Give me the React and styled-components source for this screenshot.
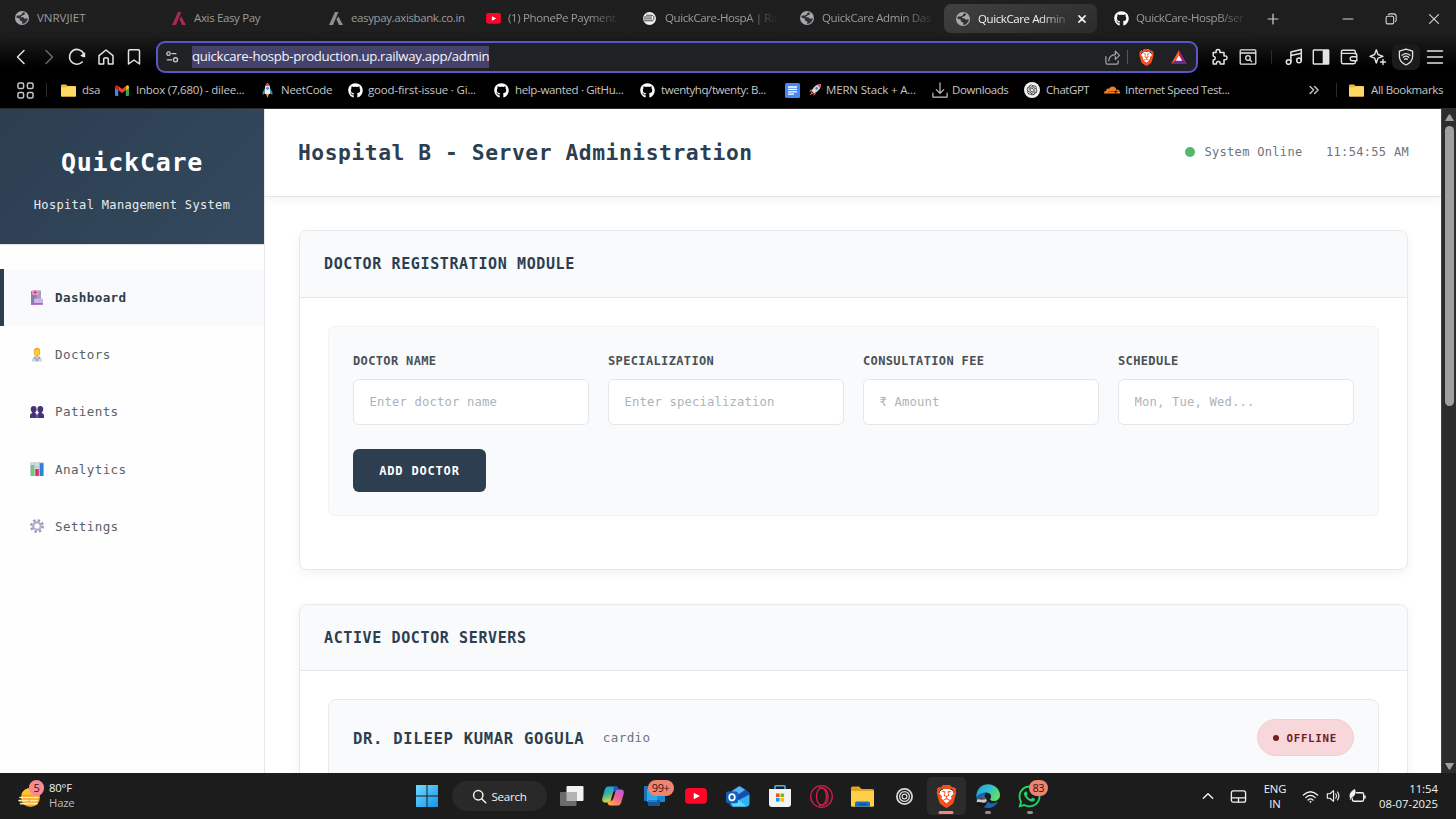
import React from 'react';
import styled, { createGlobalStyle, css } from 'styled-components';
import { FaGithub, FaWhatsapp } from 'react-icons/fa';
import { SiBrave, SiOpenai, SiCloudflare } from 'react-icons/si';

const UI = `"Open Sans", "Noto Sans", sans-serif`;
const MONO = `"DejaVu Sans Mono", "Liberation Mono", monospace`;

const Global = createGlobalStyle`
  * { box-sizing: border-box; }
  body { margin: 0; background: #000; overflow: hidden; }
  svg { display: block; flex: none; overflow: visible; }
`;

const Screen = styled.div`
  width: 1456px; height: 819px; display: flex; flex-direction: column;
  font-family: ${UI}; overflow: hidden;
`;

/* ---------- browser chrome ---------- */
const Chrome = styled.header`
  height: 109px; flex: none; display: flex; flex-direction: column;
  background: linear-gradient(#1f1f1f 0, #1e1e1e 34px, #000 68px, #000 100%);
  border-bottom: 1px solid #2b2b2b;
`;
const TabStrip = styled.div`
  height: 38px; display: flex; align-items: flex-start; padding: 4px 0 0 2px; gap: 4px;
`;
const Tab = styled.div`
  width: 153px; height: 29px; padding: 0 ${p => (p.$active ? 7 : 3)}px 0 ${p => (p.$active ? 12 : 13)}px;
  display: flex; align-items: center;
  border-radius: 7px; color: ${p => (p.$active ? '#f1f1f1' : '#9b9b9b')};
  ${p => (p.$active ? css`background: linear-gradient(160deg, #414141, #2b2b2b);`
    : css`border-bottom: 1px solid #1b1b1b;`)}
`;
const TabIcon = styled.span`width: 22px; flex: none; display: flex; align-items: center;`;
const TabTitle = styled.span`
  flex: 1; overflow: hidden; white-space: nowrap; font-size: 11.5px; line-height: 18px;
  letter-spacing: ${p => p.$ls || 0}px;
  ${p => p.$fade && css`mask-image: linear-gradient(90deg, #000 calc(100% - 34px), transparent calc(100% - 2px));`}
`;
const NewTab = styled.span`width: 29px; height: 29px; display: grid; place-items: center; color: #ccc;`;
const WindowControls = styled.div`
  margin-left: auto; display: flex; height: 29px; align-items: center; color: #d6d6d6; padding-right: 1px;
`;
const WinButton = styled.span`width: 43px; display: grid; place-items: center;`;

const Toolbar = styled.div`height: 38px; display: flex; align-items: center; padding-left: 7px; color: #e3e3e3;`;
const Cell = styled.span`
  width: ${p => p.$w}px; height: 28px; display: grid; place-items: center; color: ${p => p.$c || 'inherit'}; flex: none;
`;
const DividerCell = styled(Cell)`margin-right: 8px;`;
const ShieldCell = styled(Cell)`height: 26px; background: #1b1b1b; border-radius: 7px;`;
const Divider = styled.span`width: 1px; height: 14px; background: ${p => p.$c || '#2b2b2b'};`;
const AddressBar = styled.div`
  width: 1042px; height: 32px; margin: 0 7px 0 9px; display: flex; align-items: center; flex: none;
  border: 2px solid #5b55c8; border-radius: 9px; background: #202125; padding: 0 3px 0 0;
`;
const Url = styled.span`
  background: #45436c; color: #f4f4fa; font-size: 13.2px; line-height: 21px; height: 22px;
  white-space: nowrap; letter-spacing: -0.3px; width: 297px; margin-right: auto; margin-left: 7px;
`;

const Bookmarks = styled.div`height: 28px; display: flex; align-items: center; padding-left: 10px; color: #c6c6c6;`;
const Bookmark = styled.span`
  width: ${p => p.$w}px; display: flex; align-items: center; white-space: nowrap; flex: none;
  font-size: 11.5px; letter-spacing: ${p => p.$ls || 0}px; line-height: 16px;
`;
const BookmarkIcon = styled.span`width: ${p => p.$w}px; flex: none; display: flex; align-items: center;`;

/* ---------- web page ---------- */
const Viewport = styled.div`height: 664px; flex: none; display: flex; background: #fff; font-family: ${MONO}; overflow: hidden;`;
const Sidebar = styled.aside`width: 265px; flex: none; border-right: 1px solid #e4e6e9; background: #fefefe;`;
const Brand = styled.div`
  height: 136px; border-bottom: 1px solid #dfe3e8; text-align: center; color: #fff; padding-top: 34px;
  background: linear-gradient(135deg, #2c3e50, #34495e);
`;
const BrandName = styled.div`font-size: 25px; font-weight: 700; line-height: 40px; letter-spacing: 0.75px;`;
const BrandSub = styled.div`font-size: 12px; line-height: 20px; margin-top: 12px; letter-spacing: 0.33px; color: #e9ecef;`;
const Nav = styled.nav`padding-top: 24px;`;
const NavItem = styled.div`
  height: 57.2px; display: flex; align-items: center; padding-left: 26px; gap: 11px;
  border-left: 4px solid ${p => (p.$active ? '#2c3e50' : 'transparent')};
  background: ${p => (p.$active ? '#f8fafb' : 'transparent')};
  color: ${p => (p.$active ? '#2c3e50' : '#5a6268')}; font-weight: ${p => (p.$active ? 700 : 400)};
  font-size: 12.6px; letter-spacing: 0.36px;
`;
const NavIcon = styled.span`width: 14px; flex: none; display: grid; place-items: center;`;
const Main = styled.main`flex: 1; min-width: 0; overflow: hidden;`;
const PageHeader = styled.div`
  height: 88px; padding: 0 32px 1px 33px; display: flex; align-items: center; justify-content: space-between;
  border-bottom: 1px solid #e4e6e9; box-shadow: 0 2px 9px rgba(0, 0, 0, 0.06);
`;
const PageTitle = styled.h1`margin: 0; color: #2c3e50; font-size: 21.3px; font-weight: 700; letter-spacing: 0.55px; white-space: nowrap;`;
const Status = styled.div`display: flex; align-items: center; color: #6c757d; font-size: 12px; letter-spacing: 0.32px; white-space: nowrap;`;
const Dot = styled.span`width: 10px; height: 10px; border-radius: 50%; background: #52b96a; margin-right: 9px;`;
const Clock = styled.span`margin-left: 23.5px;`;
const Content = styled.div`padding: 33px 33px 0 34px; display: flex; flex-direction: column; gap: 34px;`;
const Card = styled.section`
  height: ${p => p.$h}px; border: 1px solid #e6e9eb; border-radius: 8px; background: #fff; flex: none;
  box-shadow: 0 3px 11px rgba(0, 0, 0, 0.055); overflow: hidden;
`;
const CardHead = styled.h2`
  margin: 0; height: ${p => p.$h || 67}px; padding: ${p => (p.$h ? '1px 24px 0' : '0 24px 1px')}; display: flex; align-items: center;
  border-bottom: 1px solid #e6e9eb; background: #f8fafb; color: #2c3e50; font-size: 15px; font-weight: 700; letter-spacing: 0.62px;
`;
const CardBody = styled.div`padding: 28px 28px;`;
const Form = styled.div`
  height: 190px; padding: 24px 24px; border: 1px solid #f0f2f4; border-radius: 6px; background: #f8fafb;
`;
const Fields = styled.div`display: grid; grid-template-columns: repeat(4, 1fr); gap: 19px;`;
const Field = styled.label`
  display: flex; flex-direction: column; color: #495057; font-size: 12px; font-weight: 700;
  line-height: 21px; letter-spacing: 0.36px;
`;
const Input = styled.input`
  width: 100%; height: 46px; margin-top: 7px; padding: 0 15.5px; border: 1px solid #e3e7ea; border-radius: 6px;
  background: #fff; font: 400 12.2px ${MONO}; letter-spacing: 0.16px;
  &::placeholder { color: #adb3ba; opacity: 1; }
`;
const AddButton = styled.button`
  margin-top: 24px; width: 133px; height: 43px; border: 0; border-radius: 6px; background: #2c3e50; color: #fff;
  font: 700 12px ${MONO}; letter-spacing: 0.82px; padding: 0;
`;
const Server = styled.div`
  height: 120px; padding: 0 24px; border: 1px solid #e6e9eb; border-radius: 8px; background: #f8fafb;
`;
const ServerHead = styled.div`height: 75px; display: flex; align-items: center;`;
const DoctorName = styled.span`color: #2c3e50; font-weight: 700; font-size: 15.6px; letter-spacing: 0.67px; margin-top: 2px;`;
const Specialty = styled.span`color: #6c757d; font-size: 12.6px; letter-spacing: 0.36px; margin-left: 18.5px;`;
const Pill = styled.span`
  margin-left: auto; width: 97px; height: 37px; border-radius: 19px; background: #f8d7da; border: 1px solid #f5cdd1; color: #721c24;
  display: flex; align-items: center; padding: 1px 0 0 15px; gap: 7.5px; font-weight: 700; font-size: 10.8px; letter-spacing: 0.7px;
`;
const PillDot = styled.span`width: 6px; height: 6px; border-radius: 50%; background: #721c24;`;
const Scrollbar = styled.div`
  width: 15px; background: #2c2c2c; border-left: 1px solid #444; display: flex; flex-direction: column; align-items: center; padding: 5px 0 3px;
`;
const Thumb = styled.div`width: 9px; height: 280px; margin: 5px 0 auto; border-radius: 5px; background: #9f9f9f;`;

/* ---------- taskbar ---------- */
const Taskbar = styled.footer`
  height: 46px; flex: none; display: flex; align-items: center; background: #1c1c1c; color: #f2f2f2; font-size: 11.3px;
`;
const Weather = styled.div`width: 406px; display: flex; align-items: center; padding: 0 0 3px 18px; gap: 8px;`;
const WeatherText = styled.div`line-height: 15px; letter-spacing: -0.2px;`;
const Muted = styled.div`color: #bdbdbd;`;
const Search = styled.div`
  width: 95px; height: 30px; margin: 0 4px; border-radius: 15px; background: #292929; display: flex; align-items: center;
  justify-content: center; gap: 4px; font-size: 11.6px; letter-spacing: -0.25px;
`;
const TaskItem = styled.div`
  position: relative; width: ${p => p.$w || 41.7}px; height: 46px; display: grid; place-items: center; flex: none;
`;
const ActiveTile = styled.div`width: 39px; height: 38px; border-radius: 5px; background: #2b2b2b; display: grid; place-items: center;`;
const Running = styled.span`
  position: absolute; bottom: 5px; left: 50%; transform: translateX(-50%); height: 3px; border-radius: 2px;
  width: ${p => (p.$active ? 15 : 6)}px; background: ${p => (p.$active ? '#ee8a78' : '#8f8f8f')};
`;
const Badge = styled.span`
  position: absolute; top: ${p => p.$top}px; left: ${p => p.$left}px; height: 16px; width: ${p => p.$w}px;
  border-radius: 8px; background: ${p => p.$c || '#ee8570'}; color: #3a1512; font-size: 11px; line-height: 16px;
  text-align: center; letter-spacing: -0.4px;
`;
const WeatherIcon = styled.div`position: relative; width: 23px; height: 28px; display: grid; place-items: start center; padding-top: 7px;`;
const Tray = styled.div`margin-left: auto; display: flex; align-items: center; padding-right: 18px;`;
const Lang = styled.div`width: 44px; text-align: center; line-height: 15px; letter-spacing: -0.2px;`;
const DateTime = styled.div`
  display: flex; flex-direction: column; align-items: flex-end; line-height: 15px; width: 68px; margin-top: -1px; white-space: nowrap;
`;
const BraveMark = styled.span`
  width: ${p => p.$s}px; height: ${p => p.$s}px; display: grid; place-items: center; color: #f4501e;
  background: radial-gradient(circle, #fff 0 48%, transparent 50%);
`;

/* ---------- drawings ---------- */
const Line = ({ s = 18, w = 1.5, children, ...r }) => (
  <svg width={s} height={s} viewBox="0 0 18 18" fill="none" stroke="currentColor" strokeWidth={w}
    strokeLinecap="round" strokeLinejoin="round" {...r}>{children}</svg>
);
const Globe = () => (
  <svg width="14" height="14" viewBox="0 0 14 14">
    <circle cx="7" cy="7" r="7" fill="#a5a8ab" />
    <path d="M8 1.2 10.3 2 9.2 3.8 6.4 5 5.8 6.2 8.4 6.2 9.8 7.8 12.8 7.2 12.2 9.8 10 12.2 7 12.9 7.4 10.8 5 9.4 4.6 7.6 1.2 6.6 2 4.4 4.6 4.6 6.6 3.6Z" fill="#2e3033" />
  </svg>
);
const Axis = ({ c }) => (
  <svg width="14" height="13" viewBox="0 0 14 13" fill={c}>
    <path d="M6 0H9.4L4 13H0Z" /><path d="M7.4 7.3 9.4 4.4 14 13H10Z" />
  </svg>
);
const Youtube = ({ w }) => (
  <svg width={w} height={w * 0.72} viewBox="0 0 22 16">
    <rect width="22" height="16" rx="3.6" fill="#ff0528" /><path d="M8.7 4.7 15 8 8.7 11.3Z" fill="#fff" />
  </svg>
);
const Railway = () => (
  <svg width="13" height="13" viewBox="0 0 13 13">
    <circle cx="6.5" cy="6.5" r="6.5" fill="#f0f0f0" />
    <path d="M1 5H8.8M.5 6.9H9M1 8.8H9.6M3 3.2H8c2 0 3 1.2 3 2.6S10.4 8.4 9.4 8.8" stroke="#25252b" strokeWidth=".8" fill="none" />
  </svg>
);
const Folder = () => (
  <svg width="15" height="13" viewBox="0 0 15 13">
    <path d="M0 1.6Q0 .4 1.2.4H5L6.6 2H13.8Q15 2 15 3.2V11.4Q15 12.6 13.8 12.6H1.2Q0 12.6 0 11.4Z" fill="#f2b93b" />
    <path d="M0 4.4Q0 3.6 1 3.6H5.2L6.7 2.6H14Q15 2.6 15 3.6V11.4Q15 12.6 13.8 12.6H1.2Q0 12.6 0 11.4Z" fill="#ffd966" />
  </svg>
);
const Gmail = () => (
  <svg width="14" height="11" viewBox="0 0 14 11">
    <path d="M0 1.4V10Q0 11 1 11H3.2V4.6Z" fill="#4285f4" />
    <path d="M14 1.4V10Q14 11 13 11H10.8V4.6Z" fill="#34a853" />
    <path d="M10.8 5V1L12.2.3Q14 0 14 1.8V3.2L10.8 5.6Z" fill="#fbbc04" />
    <path d="M3.2 1 7 4 10.8 1V5.2L7 8.1 3.2 5.2Z" fill="#ea4335" />
    <path d="M0 3V1.8Q.2 0 1.8.2L3.2 1V5.4Z" fill="#c5221f" />
  </svg>
);
const RocketUp = () => (
  <svg width="11" height="15" viewBox="0 0 11 15">
    <path d="M2.8 6 .6 9V12L3 10.5ZM8.2 6 10.4 9V12L8 10.5Z" fill="#3b88c9" />
    <path d="M5.5 0C8 2 8.6 5 8 11H3C2.4 5 3 2 5.5 0Z" fill="#e9eef3" />
    <path d="M5.5 0C6.6.9 7.4 2 7.8 3H3.2C3.6 2 4.4.9 5.5 0Z" fill="#d94841" />
    <circle cx="5.5" cy="5.3" r="1.4" fill="#3d7fc4" /><path d="M4 11H7L5.5 15Z" fill="#f39a2d" />
  </svg>
);
const RocketTilt = () => (
  <svg width="12" height="12" viewBox="0 0 12 12">
    <path d="M3.6 5 1.4 5.4 0 7.8 3 7.4ZM7 8.4 6.6 10.6 4.4 12 4.6 9Z" fill="#e2324d" />
    <path d="M12 0C12 4 9.5 7.4 5 9.4L2.6 7C4.6 2.5 8 0 12 0Z" fill="#d7dbe0" />
    <path d="M12 0C12 1.5 11.7 2.7 11.1 3.9L8.1.9C9.3.3 10.5 0 12 0Z" fill="#ed4661" />
    <circle cx="7.6" cy="4.4" r="1.3" fill="#3c7bb5" /><path d="M2.6 8 4 9.4 1 11.2Z" fill="#ff9a3c" />
  </svg>
);
const Docs = () => (
  <svg width="15" height="15" viewBox="0 0 15 15"><rect width="15" height="15" rx="1.5" fill="#4688f4" />
    <path d="M3 4H12M3 6.4H12M3 8.8H12M3 11.2H9" stroke="#fff" strokeWidth="1.3" /></svg>
);
const Gpt = () => (
  <svg width="16" height="16" viewBox="0 0 16 16"><circle cx="8" cy="8" r="8" fill="#f2f2f2" />
    <g transform="translate(2.7 2.7)" color="#222"><SiOpenai size={10.6} /></g></svg>
);
const Bat = () => (
  <svg width="16" height="14" viewBox="0 0 16 14">
    <path d="M8 0 0 14 8 8.5Z" fill="#ff5a35" /><path d="M8 0 16 14 8 8.5Z" fill="#9e2072" />
    <path d="M0 14H16L8 8.5Z" fill="#662d91" /><path d="M8 5.2 11.2 10.8H4.8Z" fill="#fff" />
  </svg>
);
const Hospital = () => (
  <svg width="12" height="15" viewBox="0 0 12 15">
    <rect x="0" y="1" width="7" height="13.5" fill="#8d7ea6" /><rect x="5.5" y=".5" width="4.5" height="9" fill="#ab9dbd" />
    <rect x="1.2" y="0" width="6" height="4.8" rx="1" fill="#f0a5cf" /><path d="M4.2 .7V4.1M2.5 2.4H5.9" stroke="#d13a8b" strokeWidth="1.2" />
    <rect x="3" y="8.5" width="9" height="4.6" rx=".8" fill="#d4afed" />
    <rect x="0" y="13" width="12" height="1.8" fill="#a968c8" />
  </svg>
);
const Doctor = () => (
  <svg width="12" height="15" viewBox="0 0 13 15">
    <path d="M1 15Q1 9.4 6.5 9.4T12 15Z" fill="#c5d3ea" /><path d="M4.6 9.3H8.4L6.5 12.8Z" fill="#fff" />
    <path d="M4.4 9.6V12.5M8.6 9.6V12.5M6.5 11V15" stroke="#5c68a6" strokeWidth=".9" />
    <path d="M3 4.2C3 1.4 4.4.2 6.5.2S10 1.4 10 4.2L9.5 8.2H3.5Z" fill="#eda52d" /><ellipse cx="6.4" cy="5.2" rx="2.7" ry="3.4" fill="#ffc83d" />
    <rect x="5.3" y="7.6" width="2.4" height="2.8" fill="#efb22e" />
  </svg>
);
const People = () => (
  <svg width="14" height="12" viewBox="0 0 14 12" fill="#48307a">
    <ellipse cx="3.7" cy="3.3" rx="2.9" ry="3.2" /><ellipse cx="10.3" cy="3.3" rx="2.9" ry="3.2" />
    <path d="M0 12V9.6Q0 7.2 2.4 7H5Q6.8 7.2 6.8 9.6V12ZM7.2 12V9.6Q7.2 7.2 9 7H11.6Q14 7.2 14 9.6V12ZM2.2 4H5.2V8H2.2ZM8.8 4H11.8V8H8.8Z" />
  </svg>
);
const Chart = () => (
  <svg width="14" height="14" viewBox="0 0 14 14"><rect width="14" height="14" rx="1" fill="#d5d8e2" />
    <path d="M5 0V14M9.5 0V14M0 5H14M0 9.5H14" stroke="#b5b8c8" strokeWidth=".5" />
    <rect x=".7" y="3" width="3.6" height="11" fill="#6fcf70" /><rect x="5.3" y="7" width="3.5" height="7" fill="#dd2e6b" />
    <rect x="9.8" y="1.2" width="3.6" height="12.8" fill="#2d83d4" /></svg>
);
const Gear = () => (
  <svg width="14" height="14" viewBox="0 0 14 14">
    <circle cx="7" cy="7" r="5.8" fill="none" stroke="#9a91b5" strokeWidth="2.2" strokeDasharray="2.4 2.15" />
    <circle cx="7" cy="7" r="3.8" fill="none" stroke="#b6aecd" strokeWidth="2.4" />
  </svg>
);
const Arrow = ({ down }) => (
  <svg width="9" height="7" viewBox="0 0 9 7"><path d={down ? 'M0 0H9L5.2 6.5H3.8Z' : 'M0 7H9L5.2 .5H3.8Z'} fill="#9f9f9f" /></svg>
);
const Haze = () => (
  <svg width="21" height="19" viewBox="0 0 21 19"><circle cx="11.5" cy="9.5" r="9.5" fill="#f5a623" />
    <path d="M11.5 0A9.5 9.5 0 0 0 2.5 6.5H20Q17 0 11.5 0Z" fill="#ffc52e" />
    <path d="M1 9.5H19M0 12.6H9M11.5 12.6H18M1.5 15.6H18" stroke="#ffe9a8" strokeWidth="1.6" strokeLinecap="round" /></svg>
);
const Windows = () => (
  <svg width="22" height="22" viewBox="0 0 22 22">
    <defs><linearGradient id="win" x1="0" y1="0" x2="1" y2="1"><stop stopColor="#6fdcff" /><stop offset="1" stopColor="#1593e6" /></linearGradient></defs>
    <path d="M0 0H10.5V10.5H0ZM11.5 0H22V10.5H11.5ZM0 11.5H10.5V22H0ZM11.5 11.5H22V22H11.5Z" fill="url(#win)" /></svg>
);
const TaskView = () => (
  <svg width="24" height="22" viewBox="0 0 24 22"><rect x="6.5" y="1" width="17" height="15" rx="1" fill="#f2f2f2" />
    <rect x="0" y="7" width="16.5" height="14" rx="1" fill="#6b6b6b" /><rect x="6.5" y="7" width="10" height="9" fill="#b3b3b3" /></svg>
);
const Copilot = () => (
  <svg width="22" height="20" viewBox="0 0 22 20">
    <defs>
      <linearGradient id="c1" x1="0" y1="0" x2=".3" y2="1"><stop stopColor="#1a9df0" /><stop offset=".5" stopColor="#37b29b" /><stop offset="1" stopColor="#f3d33a" /></linearGradient>
      <linearGradient id="c2" x1="1" y1="0" x2=".3" y2="1"><stop stopColor="#a760ee" /><stop offset=".5" stopColor="#ef5f96" /><stop offset="1" stopColor="#ffa64c" /></linearGradient>
    </defs>
    <path d="M6 .6H14Q15.6.6 16.2 2.5L17 5H13.5Q11.6 5 11 7L9 14Q8.3 16.5 6 16.5H2.6Q-.5 16 .3 12.3L2.8 3.5Q3.8.6 6 .6Z" fill="url(#c1)" />
    <path d="M16 19.4H8Q6.4 19.4 5.8 17.5L5 15H8.5Q10.4 15 11 13L13 6Q13.7 3.5 16 3.5H19.4Q22.5 4 21.7 7.7L19.2 16.5Q18.2 19.4 16 19.4Z" fill="url(#c2)" />
    <path d="M12 .6H14Q15.6.6 16.2 2.5L16.6 3.6Q14 3.5 13.2 6L12.8 7.4Q10.5 4 12 .6Z" fill="#2254c8" />
    <path d="M13.2 6 11 13.2 9.2 13.4 11 7Q11.4 5.6 12.4 5.1Z" fill="#1c1c1c" />
  </svg>
);
const Widgets = () => (
  <svg width="22" height="20" viewBox="0 0 22 20"><rect x="0" y="0" width="13" height="15" fill="#1b72ba" />
    <rect x="3" y="3" width="18" height="13" fill="#1489d6" /><rect x="3" y="3" width="10" height="12" fill="#2fa9ea" />
    <rect x="4" y="14" width="12" height="6" fill="#12589b" /><rect x="4" y="14" width="9" height="2" fill="#1c7fcf" /></svg>
);
const Outlook = () => (
  <svg width="24" height="21" viewBox="0 0 24 21">
    <path d="M3.5 6.5 12 .6Q13.4-.3 14.8.6L22 5.4Q23.4 6.4 23.4 8V17.5Q23.4 20.4 20.5 20.4H6.5Q3.5 20.4 3.5 17.5Z" fill="#1d5fc0" />
    <path d="M6 5 13.4.2 19 3.8 9 10.5Z" fill="#56b4ee" /><path d="M10 10 20 4.2 23.2 7V9L13 15Z" fill="#164fae" />
    <path d="M23.4 8.6V17.5Q23.4 20.4 20.5 20.4H6.5L11 15Z" fill="#2fb4f0" /><path d="M5 17 12 13.6 20.5 20.4H6.5Z" fill="#5fd6fa" />
    <rect x="0" y="5.4" width="12" height="11.8" rx="2" fill="#1061bc" /><ellipse cx="6" cy="11.3" rx="2.8" ry="3.1" fill="none" stroke="#fff" strokeWidth="1.7" /></svg>
);
const Store = () => (
  <svg width="22" height="22" viewBox="0 0 22 22"><path d="M6 5V1.5Q6 .8 6.8.8H15.2Q16 .8 16 1.5V5" fill="none" stroke="#3db7ee" strokeWidth="1.6" />
    <path d="M0 4H22V19Q22 22 19 22H3Q0 22 0 19Z" fill="#f3f3f3" />
    <path d="M7 8.5H10.6V12.1H7Z" fill="#f25022" /><path d="M11.5 8.5H15.1V12.1H11.5Z" fill="#7fba00" />
    <path d="M7 13H10.6V16.6H7Z" fill="#00a4ef" /><path d="M11.5 13H15.1V16.6H11.5Z" fill="#ffb900" /></svg>
);
const Opera = () => (
  <svg width="23" height="23" viewBox="0 0 23 23" fill="none" stroke="#d31d4c" strokeWidth="1.3"><circle cx="11.5" cy="11.5" r="10.8" />
    <ellipse cx="11.5" cy="11.5" rx="5" ry="8.7" /><path d="M9 2.7Q17.5 1.6 18 11.5T9 20.3" /></svg>
);
const Explorer = () => (
  <svg width="23" height="21" viewBox="0 0 23 21"><path d="M0 2Q0 .5 1.5.5H8L10.5 3H21.5Q23 3 23 4.5V10H0Z" fill="#e2a41e" />
    <path d="M0 5H23V19.5Q23 20.8 21.5 20.8H1.5Q0 20.8 0 19.5Z" fill="#ffcf4b" />
    <path d="M4 20.8V17Q4 15.5 5.5 15.5H17.5Q19 15.5 19 17V20.8Z" fill="#1770c4" /><path d="M7.5 18.5H15.5" stroke="#0c4f95" strokeWidth="1.6" /></svg>
);
const Rings = () => (
  <svg width="17" height="17" viewBox="0 0 17 17" fill="none" stroke="#d8d8d8"><circle cx="8.5" cy="8.5" r="7.6" strokeWidth="1.8" />
    <circle cx="8.5" cy="8.5" r="4.9" strokeWidth="1.3" /><circle cx="8.5" cy="8.5" r="2.4" strokeWidth="1.2" /></svg>
);
const Edge = () => (
  <svg width="24" height="24" viewBox="0 0 24 24">
    <defs><linearGradient id="eg" x1="0" y1="0" x2="1" y2=".4"><stop stopColor="#1f9de0" /><stop offset=".6" stopColor="#35c1c9" /><stop offset="1" stopColor="#62dc66" /></linearGradient></defs>
    <path d="M.3 12C2.5 8.6 6.5 7.6 10 8.6 8 11 8 15 11 17.5S18 19.8 22 17.5C20 21.5 16.5 24 12 24 5.5 24 .3 19 .3 12Z" fill="#1663b8" />
    <path d="M.4 11C1.5 4 6 .3 12 .3S24 5 24 11C24 15 21 17 18 17S13.5 15.6 14.5 14.4C16 12.4 15 8.5 10 8.5 6 8.5 3 9.5 .4 13Z" fill="url(#eg)" />
    <circle cx="5.8" cy="18" r="5.2" fill="#161616" /><path d="M.8 16.4Q2.5 13 6 12.8T10.8 16.4Q10 19.6 6.5 18.6 3.5 17.6 .8 18.2Z" fill="#c9cacb" />
    <path d="M1.4 15Q3 12.6 6 12.8T10.4 15Q6 16.6 1.4 15Z" fill="#4b4d50" />
  </svg>
);

const github = <FaGithub size={15} color="#fff" />;
const bookmarks = [
  ['dsa', 54, 21, <Folder />, -0.3],
  ['Inbox (7,680) - dilee...', 147, 21, <Gmail />, -0.23],
  ['NeetCode', 86, 19, <RocketUp />, -0.25],
  ['good-first-issue · Gi...', 146, 20, github, -0.18],
  ['help-wanted · GitHu...', 146, 21, github, -0.35],
  ['twentyhq/twenty: B...', 145, 21, github, -0.42],
];

const tabs = [
  ['VNRVJIET', <Globe />, 0, 0],
  ['Axis Easy Pay', <Axis c="#a52a58" />, 0, -0.35],
  ['easypay.axisbank.co.in', <Axis c="#8f8f8f" />, 0, -0.38],
  ['(1) PhonePe Payment', <Youtube w={15} />, 1, -0.36],
  ['QuickCare-HospA | Ra', <Railway />, 1, -0.4],
  ['QuickCare Admin Das', <Globe />, 1, -0.4],
  ['QuickCare Admin', <Globe />, 1, -0.4, true],
  ['QuickCare-HospB/ser', github, 1, -0.4],
];

export default function App() {
  return (
    <Screen>
      <Global />
      <Chrome>
        <TabStrip>
          {tabs.map(([t, icon, fade, ls, active], i) => (
            <Tab key={i} $active={active}>
              <TabIcon>{icon}</TabIcon>
              <TabTitle $fade={fade} $ls={ls}>{t}</TabTitle>
              {active && <Line s={16} w={1.8}><path d="M5.5 5.5 12.5 12.5M12.5 5.5 5.5 12.5" /></Line>}
            </Tab>
          ))}
          <NewTab><Line s={16} w={1.4}><path d="M9 3.5V14.5M3.5 9H14.5" /></Line></NewTab>
          <WindowControls>
            <WinButton><Line s={16} w={1.2}><path d="M3.5 9H14.5" /></Line></WinButton>
            <WinButton><Line s={16} w={1.2}><rect x="3.5" y="6" width="8.5" height="8.5" rx="1.5" /><path d="M6 4Q6.5 3.2 8 3.2H12Q14.8 3.2 14.8 6V10Q14.8 11.5 14 12" /></Line></WinButton>
            <WinButton><Line s={16} w={1.3}><path d="M4 4 14 14M14 4 4 14" /></Line></WinButton>
          </WindowControls>
        </TabStrip>
        <Toolbar>
          <Cell $w={28}><Line><path d="M12 2.5 5.5 9 12 15.5" /></Line></Cell>
          <Cell $w={28} $c="#6b6b6b"><Line><path d="M6 2.5 12.5 9 6 15.5" /></Line></Cell>
          <Cell $w={28}><Line w={1.6}><path d="M14.2 14A7.4 7.4 0 1 1 15.6 5.6" /><path d="M17.2 4.2V9.2Q14 9.6 12.4 7.6Z" fill="currentColor" stroke="none" /></Line></Cell>
          <Cell $w={30}><Line><path d="M2 7.6 9 2 16 7.6V16H11.3V11.4Q11.3 9.8 9 9.8T6.7 11.4V16H2Z" /></Line></Cell>
          <Cell $w={26}><Line><path d="M3.5 3Q3.5 1.8 4.7 1.8H13.3Q14.5 1.8 14.5 3V16L9 12 3.5 16Z" /></Line></Cell>
          <AddressBar>
            <Cell $w={27} $c="#c9c9cc"><Line s={14} w={1.7}><circle cx="4.5" cy="4.7" r="2.2" /><path d="M9 4.7H14" /><circle cx="13.5" cy="12.6" r="2.6" /><path d="M3 12.6H8.5" /></Line></Cell>
            <Url>quickcare-hospb-production.up.railway.app/admin</Url>
            <Cell $w={30} $c="#a5a5a8"><Line s={17} w={1.3}><path d="M2 8V14.5Q2 16 3.5 16H13.5Q15 16 15 14.5V12.5M5 12.5Q5.5 6.5 12 6M12 6V2.3L16.4 6.8 12 11V8" /></Line></Cell>
            <Divider $c="#55565a" />
            <Cell $w={36}><BraveMark $s={17}><SiBrave size={17} /></BraveMark></Cell>
            <Cell $w={29}><Bat /></Cell>
          </AddressBar>
          <Cell $w={28}><Line><path d="M3.2 4.5H6.2Q5.5 1.5 8 1.5T9.8 4.5H14V8Q17 7.4 17 9.8T14 11.8V16H10.2Q10.4 13.4 8.4 13.4T6.4 16H3.2V12Q5.4 11.8 5.2 9.9T3.2 8Z" /></Line></Cell>
          <Cell $w={30}><Line w={1.3}><rect x="1.2" y="1.8" width="15.6" height="14.4" rx="1" /><path d="M1.5 5H16.5" /><circle cx="9" cy="10" r="2.3" /><path d="M10.8 11.8 12.6 13.6" /></Line></Cell>
          <Cell $w={17}><Divider /></Cell>
          <Cell $w={28}><Line><circle cx="3.6" cy="14" r="2.3" /><circle cx="14" cy="12.4" r="2.3" /><path d="M5.9 14V4L16.3 1.5V12.4M5.9 7.6 16.3 5.2" /></Line></Cell>
          <Cell $w={26}><Line w={1.4}><rect x="1.3" y="2" width="15.4" height="14" rx=".6" /><path d="M11.4 2.6H16.2V15.4H11.4Z" fill="currentColor" /></Line></Cell>
          <Cell $w={30}><Line w={1.4}><path d="M15.4 6V4Q15.4 2.3 13.7 2.3H3Q1.4 2.3 1.4 4V14Q1.4 15.7 3 15.7H13.7Q15.4 15.7 15.4 14M1.8 5.4H15.6Q16.8 5.4 16.8 7V12.8H12.3Q10.2 12.8 10.2 10.8T12.3 8.8H16.8" /></Line></Cell>
          <Cell $w={28}><Line w={1.4}><path d="M7.3 1.8 9 6.5 14 8.3 9 10.1 7.3 15 5.6 10.1 1 8.3 5.6 6.5Z" /><path d="M14 11.5V16.5M11.5 14H16.5" /></Line></Cell>
          <ShieldCell $w={28}><Line w={1.3}><path d="M9 1.1 15.6 3.2V8.6Q15.6 14 9 17 2.4 14 2.4 8.6V3.2Z" /><path d="M5 7.2Q9 4 13 7.2M6.3 9.2Q9 7.2 11.7 9.2M7.6 11.2Q9 10.3 10.4 11.2" /></Line></ShieldCell>
          <Cell $w={30}><Line w={1.4}><path d="M1.5 3H16.5M1.5 9H16.5M1.5 15H16.5" /></Line></Cell>
        </Toolbar>
        <Bookmarks>
          <Cell $w={30}><Line s={17} w={1.6}><rect x="1" y="1" width="6" height="6" rx="1.7" /><rect x="11" y="1" width="6" height="6" rx="1.7" /><rect x="1" y="11" width="6" height="6" rx="1.7" /><rect x="11" y="11" width="6" height="6" rx="1.7" /></Line></Cell>
          <DividerCell $w={13}><Divider /></DividerCell>
          {bookmarks.map(([t, w, iw, icon, ls]) => (
            <Bookmark key={t} $w={w} $ls={ls}><BookmarkIcon $w={iw}>{icon}</BookmarkIcon>{t}</Bookmark>
          ))}
          <Bookmark $w={147} $ls={-0.17}><BookmarkIcon $w={24}><Docs /></BookmarkIcon><BookmarkIcon $w={17}><RocketTilt /></BookmarkIcon>MERN Stack + A...</Bookmark>
          <Bookmark $w={92} $ls={-0.4}><BookmarkIcon $w={20}><Line s={16} w={1.3}><path d="M1 12.5V17H17V12.5M9 1V12.5M4.8 8.6 9 12.7 13.2 8.6" /></Line></BookmarkIcon>Downloads</Bookmark>
          <Bookmark $w={80} $ls={-0.45}><BookmarkIcon $w={22}><Gpt /></BookmarkIcon>ChatGPT</Bookmark>
          <Bookmark $w={200} $ls={-0.42}><BookmarkIcon $w={21}><SiCloudflare size={16} color="#f38020" /></BookmarkIcon>Internet Speed Test...</Bookmark>
          <Cell $w={20}><Line s={14} w={1.9}><path d="M4 4.5 8.5 9 4 13.5M9.8 4.5 14.3 9 9.8 13.5" /></Line></Cell>
          <Cell $w={25}><Divider /></Cell>
          <Bookmark $w={100} $ls={-0.35}><BookmarkIcon $w={22}><Folder /></BookmarkIcon>All Bookmarks</Bookmark>
        </Bookmarks>
      </Chrome>

      <Viewport>
        <Sidebar>
          <Brand><BrandName>QuickCare</BrandName><BrandSub>Hospital Management System</BrandSub></Brand>
          <Nav>
            <NavItem $active><NavIcon><Hospital /></NavIcon>Dashboard</NavItem>
            <NavItem><NavIcon><Doctor /></NavIcon>Doctors</NavItem>
            <NavItem><NavIcon><People /></NavIcon>Patients</NavItem>
            <NavItem><NavIcon><Chart /></NavIcon>Analytics</NavItem>
            <NavItem><NavIcon><Gear /></NavIcon>Settings</NavItem>
          </Nav>
        </Sidebar>
        <Main>
          <PageHeader>
            <PageTitle>Hospital B - Server Administration</PageTitle>
            <Status><Dot />System Online<Clock>11:54:55 AM</Clock></Status>
          </PageHeader>
          <Content>
            <Card $h={340}>
              <CardHead>DOCTOR REGISTRATION MODULE</CardHead>
              <CardBody>
                <Form>
                  <Fields>
                    <Field>DOCTOR NAME<Input placeholder="Enter doctor name" /></Field>
                    <Field>SPECIALIZATION<Input placeholder="Enter specialization" /></Field>
                    <Field>CONSULTATION FEE<Input placeholder="₹ Amount" /></Field>
                    <Field>SCHEDULE<Input placeholder="Mon, Tue, Wed..." /></Field>
                  </Fields>
                  <AddButton>ADD DOCTOR</AddButton>
                </Form>
              </CardBody>
            </Card>
            <Card $h={300}>
              <CardHead $h={66}>ACTIVE DOCTOR SERVERS</CardHead>
              <CardBody>
                <Server>
                  <ServerHead>
                    <DoctorName>DR. DILEEP KUMAR GOGULA</DoctorName>
                    <Specialty>cardio</Specialty>
                    <Pill><PillDot />OFFLINE</Pill>
                  </ServerHead>
                </Server>
              </CardBody>
            </Card>
          </Content>
        </Main>
        <Scrollbar><Arrow /><Thumb /><Arrow down /></Scrollbar>
      </Viewport>

      <Taskbar>
        <Weather>
          <WeatherIcon><Haze /><Badge $top={-1} $left={11} $w={15} $c="#f78a94">5</Badge></WeatherIcon>
          <WeatherText>80°F<Muted>Haze</Muted></WeatherText>
        </Weather>
        <TaskItem $w={42}><Windows /></TaskItem>
        <Search><Line s={15} w={1.8}><circle cx="7.5" cy="7.5" r="5.6" /><path d="M11.6 11.6 16.5 16.5" /></Line>Search</Search>
        <TaskItem $w={41}><TaskView /></TaskItem>
        <TaskItem><Copilot /></TaskItem>
        <TaskItem><Widgets /><Badge $top={7} $left={14} $w={26}>99+</Badge></TaskItem>
        <TaskItem><Youtube w={22} /></TaskItem>
        <TaskItem><Outlook /></TaskItem>
        <TaskItem><Store /></TaskItem>
        <TaskItem><Opera /></TaskItem>
        <TaskItem><Explorer /></TaskItem>
        <TaskItem><Rings /></TaskItem>
        <TaskItem><ActiveTile><BraveMark $s={23}><SiBrave size={23} /></BraveMark></ActiveTile><Running $active /></TaskItem>
        <TaskItem><Edge /><Running /></TaskItem>
        <TaskItem><FaWhatsapp size={25} color="#25d366" /><Running /><Badge $top={7} $left={20} $w={19}>83</Badge></TaskItem>
        <Tray>
          <Cell $w={30}><Line s={14} w={1.8}><path d="M3 12 9 6 15 12" /></Line></Cell>
          <Cell $w={30}><Line s={17} w={1.4}><rect x="1.5" y="3" width="15" height="12" rx="2" /><path d="M1.5 10.5H16.5M9 10.5V15" /></Line></Cell>
          <Lang>ENG<br />IN</Lang>
          <Cell $w={27}><Line s={17} w={1.4}><path d="M1.5 7.5Q9 .5 16.5 7.5M4 10.2Q9 5.4 14 10.2M6.4 12.7Q9 10.3 11.6 12.7" /><circle cx="9" cy="14.6" r="1" fill="currentColor" stroke="none" /></Line></Cell>
          <Cell $w={20}><Line s={16} w={1.3}><path d="M1.5 6.5H4.5L8.5 3V15L4.5 11.5H1.5ZM11 6.5Q12.8 9 11 11.5M13 4.5Q16 9 13 13.5" /></Line></Cell>
          <Cell $w={26}><Line s={17} w={1.4}><path d="M8 5H14Q15.5 5 15.5 6.5V12.5Q15.5 14 14 14H5Q3.5 14 3.5 12.5V11M17 8.3V10.7" /><path d="M1.2 10Q-.2 5 6 1.5 7.6 6.5 4.2 9ZM2.6 8 1.4 12" fill="currentColor" strokeWidth="1" /></Line></Cell>
          <DateTime><span>11:54</span><span>08-07-2025</span></DateTime>
        </Tray>
      </Taskbar>
    </Screen>
  );
}
